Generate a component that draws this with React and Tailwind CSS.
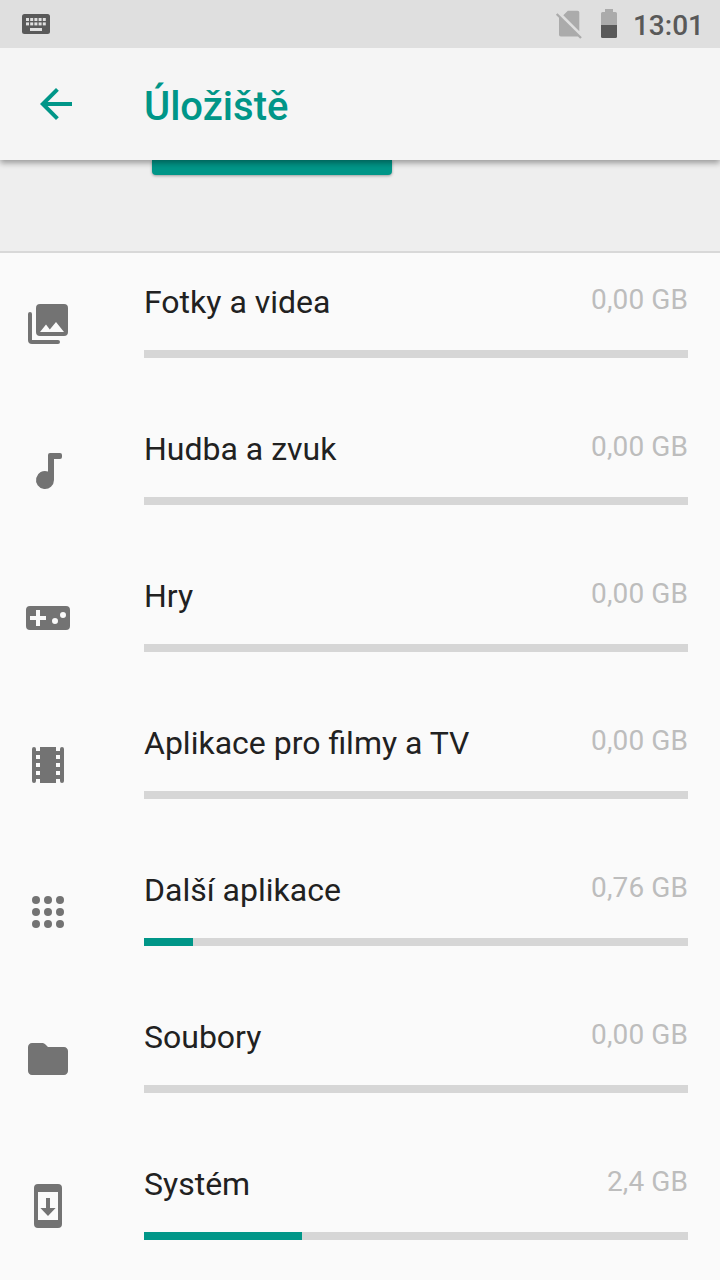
const ICONS = {
  photos: (
    <>
      <path d="M8 2h12a2 2 0 0 1 2 2v12a2 2 0 0 1-2 2H8a2 2 0 0 1-2-2V4a2 2 0 0 1 2-2ZM8 16h12l-4-5-3.1 3.7-1.9-2.4Z" fillRule="evenodd" />
      <path d="M3 7v13a1 1 0 0 0 1 1h13" fill="none" stroke="currentColor" strokeWidth="2" strokeLinecap="round" />
    </>
  ),
  music: (
    <path d="M13 3h5a1 1 0 0 1 1 1v1a1 1 0 0 1-1 1h-3v10.5A4.5 4.5 0 1 1 12 12.26V4a1 1 0 0 1 1-1Z" />
  ),
  games: (
    <path fillRule="evenodd" d="M3 6h18a2 2 0 0 1 2 2v8a2 2 0 0 1-2 2H3a2 2 0 0 1-2-2V8a2 2 0 0 1 2-2ZM6 8v3H3v2h3v3h2v-3h3v-2H8V8ZM15.500 12a1.500 1.500 0 1 0 0 3 1.500 1.500 0 0 0 0-3ZM19.500 9a1.500 1.500 0 1 0 0 3 1.500 1.500 0 0 0 0-3Z" />
  ),
  movies: (
    <path fillRule="evenodd" d="M18 4v1h-2V3H8v2H6V4a1 1 0 0 0-1-1 1 1 0 0 0-1 1v16a1 1 0 0 0 1 1 1 1 0 0 0 1-1v-1h2v2h8v-2h2v1a1 1 0 0 0 1 1 1 1 0 0 0 1-1V4a1 1 0 0 0-1-1 1 1 0 0 0-1 1ZM8 17H6v-2h2v2Zm0-4H6v-2h2v2Zm0-4H6V7h2v2Zm10 8h-2v-2h2v2Zm0-4h-2v-2h2v2Zm0-4h-2V7h2v2Z" />
  ),
  apps: [6, 12, 18].flatMap((x) => [6, 12, 18].map((y) => <circle key={`${x}-${y}`} cx={x} cy={y} r="2" />)),
  files: (
    <path d="M10 4H4c-1.1 0-1.99.9-1.99 2L2 18c0 1.1.9 2 2 2h16c1.1 0 2-.9 2-2V8c0-1.1-.9-2-2-2h-8l-1.4-1.4A2 2 0 0 0 9.4 4Z" />
  ),
  system: (
    <path fillRule="evenodd" d="M7 1h10a2 2 0 0 1 2 2v18a2 2 0 0 1-2 2H7a2 2 0 0 1-2-2V3a2 2 0 0 1 2-2ZM7 5v14h10V5ZM11 8h2v5h2.8L12 17l-3.8-4H11Z" />
  ),
};

const CATEGORIES = [
  { icon: "photos", name: "Fotky a videa", size: "0,00 GB", used: 0 },
  { icon: "music", name: "Hudba a zvuk", size: "0,00 GB", used: 0 },
  { icon: "games", name: "Hry", size: "0,00 GB", used: 0 },
  { icon: "movies", name: "Aplikace pro filmy a TV", size: "0,00 GB", used: 0 },
  { icon: "apps", name: "Další aplikace", size: "0,76 GB", used: 49 / 544 },
  { icon: "files", name: "Soubory", size: "0,00 GB", used: 0 },
  { icon: "system", name: "Systém", size: "2,4 GB", used: 158 / 544 },
];

function StatusBar() {
  return (
    <div className="z-20 flex h-12 shrink-0 items-center bg-[#dfdfdf] pr-4 pl-[22px] text-[#595959]">
      <svg className="h-5 w-7" viewBox="0 0 28 20" fill="currentColor">
        <rect width="28" height="20" rx="2.5" />
        <g fill="#dfdfdf">
          {[4, 8.2, 12.4, 16.6, 20.8].map((x) => (
            <g key={x}>
              <rect x={x} y="4" width="3" height="3" />
              <rect x={x} y="8.4" width="3" height="3" />
            </g>
          ))}
          <rect x="8" y="14" width="12" height="3" />
        </g>
      </svg>
      <svg className="ml-auto h-[30px] w-[30px]" viewBox="0 0 30 30">
        <path d="M12.800 1.800h9.700a1.800 1.800 0 0 1 1.800 1.800v18.600L8.300 6.300Z" fill="#ababab" />
        <path d="M4 7.300 23.300 26.800a2 2 0 0 1-1 .700H5.800A1.800 1.800 0 0 1 4 25.700Z" fill="#ababab" />
        <path d="M1.700 5 26 29" stroke="#ababab" strokeWidth="2.300" />
      </svg>
      <svg className="ml-4 h-[30px] w-4" viewBox="0 0 16 30">
        <path d="M4 0h8v3h2.500A1.500 1.500 0 0 1 16 4.500V17H0V4.500A1.500 1.500 0 0 1 1.500 3H4Z" fill="#ababab" />
        <path d="M0 16h16v11.500a1.500 1.500 0 0 1-1.500 1.500h-13A1.500 1.500 0 0 1 0 27.500Z" fill="#595959" />
      </svg>
      <span className="mt-1 ml-4 text-[28px] leading-8 font-medium">13:01</span>
    </div>
  );
}

function AppBar() {
  return (
    <header className="z-10 flex h-28 shrink-0 items-center bg-[#f5f5f5] pl-8 text-[#009688] shadow-[0_3px_6px_rgba(0,0,0,0.36)]">
      <svg className="h-12 w-12" viewBox="0 0 24 24" fill="currentColor">
        <path d="M20 11H7.830l5.590-5.590L12 4l-8 8 8 8 1.410-1.410L7.830 13H20Z" />
      </svg>
      <h1 className="ml-16 pt-1.5 text-[40px] leading-12 font-medium">Úložiště</h1>
    </header>
  );
}

function CategoryRow({ icon, name, size, used }) {
  return (
    <li className="flex h-[147px] shrink-0 pr-8 pl-6">
      <svg className="mt-[47px] h-12 w-12 shrink-0 text-[#737373]" viewBox="0 0 24 24" fill="currentColor">
        {ICONS[icon]}
      </svg>
      <div className="ml-[72px] flex-1 pt-7">
        <div className="flex h-[69px] justify-between">
          <span className="pt-px text-[32px] leading-10 text-[#212121]">{name}</span>
          <span className="pt-px text-[28px] leading-9 tracking-[0.1px] text-[#bdbdbd]">{size}</span>
        </div>
        <div className="h-2 bg-[#d6d6d6]">
          <div className="h-full bg-[#009688]" style={{ width: `${used * 100}%` }} />
        </div>
      </div>
    </li>
  );
}

export default function App() {
  return (
    <div className="flex h-[1280px] w-[720px] flex-col overflow-hidden bg-[#fafafa] font-['Roboto',sans-serif]">
      <StatusBar />
      <AppBar />
      <div className="h-[93px] shrink-0 border-b-2 border-[#d8d8d8] bg-[#eeeeee] pl-[152px]">
        <div className="h-[15px] w-60 rounded-b-[4px] bg-[#009688] shadow-[0_1px_3px_rgba(0,0,0,0.35)]" />
      </div>
      <ul className="flex flex-col">
        {CATEGORIES.map((category) => (
          <CategoryRow key={category.name} {...category} />
        ))}
      </ul>
    </div>
  );
}
